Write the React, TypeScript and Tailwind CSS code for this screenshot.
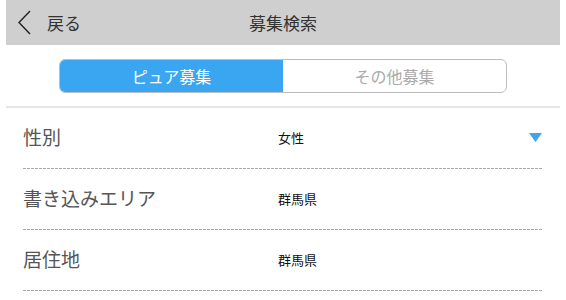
import React from "react";

const font = { fontFamily: '"Noto Sans CJK JP", "Noto Sans", sans-serif' };

function Row({ label, value, arrow }: { label: string; value: string; arrow?: boolean }) {
  return (
    <div className="mx-[23px]">
      <div className="h-[60px] flex items-center">
        <div className="w-[255px] text-[19px] text-[#555555] pb-[2px]">{label}</div>
        <div className="flex-1 text-[13px] text-[#111111]">{value}</div>
        {arrow && (
          <svg width="13" height="9" viewBox="0 0 13 9" className="mr-[1px] mb-[2px]">
            <polygon points="0,0 13,0 6.5,9" fill="#3aa6f2" />
          </svg>
        )}
      </div>
      <div className="h-px bg-[repeating-linear-gradient(to_right,#a8a8a8_0px,#a8a8a8_3px,transparent_3px,transparent_4px)]" />
    </div>
  );
}

export default function App() {
  return (
    <div className="w-[566px] h-[300px] bg-white overflow-hidden" style={font}>
      <div className="mx-[6px] h-[45px] bg-[#cfcfcf] flex items-center relative">
        <svg width="15" height="25" viewBox="0 0 15 25" className="ml-[11px]">
          <polyline points="13,1 2,12.5 13,24" fill="none" stroke="#222" strokeWidth="1.4" />
        </svg>
        <span className="ml-[15px] text-[17px] text-[#333333]">戻る</span>
        <div className="absolute left-0 right-0 top-0 bottom-0 flex items-center justify-center pointer-events-none">
          <span className="text-[17px] text-[#333333]">募集検索</span>
        </div>
      </div>
      <div className="pt-[14px] pb-[13px] flex justify-center">
        <div className="w-[448px] h-[34px] flex rounded-[6px] border border-[#bdbdbd] overflow-hidden">
          <div className="w-1/2 bg-[#3aa6f2] flex items-center justify-center text-white text-[16px]">ピュア募集</div>
          <div className="w-1/2 flex items-center justify-center text-[#aaaaaa] text-[16px]">その他募集</div>
        </div>
      </div>
      <div className="mx-[6px] h-[2px] bg-[#e6e6e6]" />
      <Row label="性別" value="女性" arrow />
      <Row label="書き込みエリア" value="群馬県" />
      <Row label="居住地" value="群馬県" />
    </div>
  );
}
